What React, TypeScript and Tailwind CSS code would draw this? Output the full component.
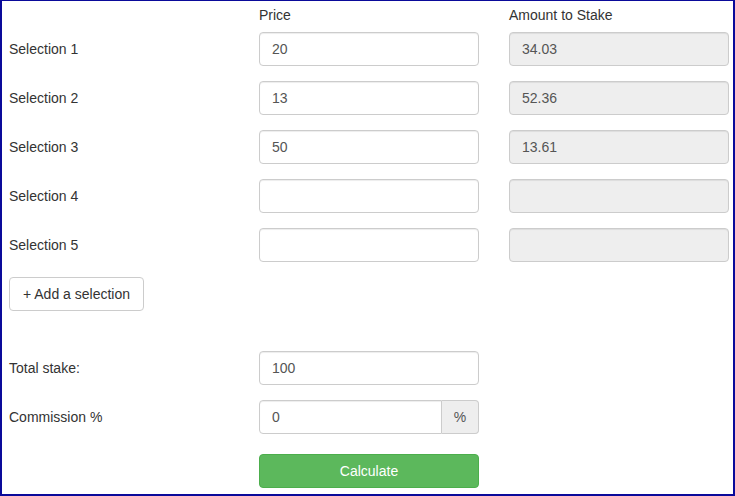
import React from "react";

const rows = [
  { label: "Selection 1", price: "20", stake: "34.03" },
  { label: "Selection 2", price: "13", stake: "52.36" },
  { label: "Selection 3", price: "50", stake: "13.61" },
  { label: "Selection 4", price: "", stake: "" },
  { label: "Selection 5", price: "", stake: "" },
];

const inputCls =
  "h-[34px] w-[220px] rounded-[4px] border border-[#ccc] px-3 text-[14px] text-[#555] outline-none shadow-[inset_0_1px_1px_rgba(0,0,0,0.075)]";

export default function App() {
  return (
    <div
      className="box-border h-[496px] w-[735px] border-t border-l-2 border-r-2 border-b-2 border-[#0a0a9a] bg-white pl-[7px] text-[14px] text-[#333]"
      style={{ fontFamily: '"Liberation Sans", Arial, sans-serif' }}
    >
      <div className="flex h-[20px] mt-[4px] leading-[20px]">
        <div className="w-[250px]" />
        <div className="w-[250px]">Price</div>
        <div>Amount to Stake</div>
      </div>

      <div className="mt-[7px] flex flex-col gap-[15px]">
        {rows.map((r) => (
          <div key={r.label} className="flex items-center">
            <div className="w-[250px]">{r.label}</div>
            <input className={inputCls + " bg-white"} defaultValue={r.price} />
            <input
              className={inputCls + " ml-[30px] cursor-not-allowed bg-[#eee]"}
              defaultValue={r.stake}
              disabled
            />
          </div>
        ))}
      </div>

      <button className="mt-[15px] h-[34px] w-[135px] rounded-[4px] border border-[#ccc] bg-white text-[14px] text-[#333]">
        + Add a selection
      </button>

      <div className="mt-[40px] flex items-center">
        <div className="w-[250px]">Total stake:</div>
        <input className={inputCls + " bg-white"} defaultValue="100" />
      </div>

      <div className="mt-[15px] flex items-center">
        <div className="w-[250px]">Commission %</div>
        <div className="flex w-[220px]">
          <input
            className="h-[34px] w-[183px] rounded-l-[4px] border border-[#ccc] px-3 text-[14px] text-[#555] outline-none shadow-[inset_0_1px_1px_rgba(0,0,0,0.075)]"
            defaultValue="0"
          />
          <span className="flex h-[34px] flex-1 items-center justify-center rounded-r-[4px] border border-l-0 border-[#ccc] bg-[#eee] text-[14px] text-[#555]">
            %
          </span>
        </div>
      </div>

      <div className="mt-[20px] flex">
        <div className="w-[250px]" />
        <button className="h-[34px] w-[220px] rounded-[4px] border border-[#4cae4c] bg-[#5cb85c] text-[14px] text-white">
          Calculate
        </button>
      </div>
    </div>
  );
}
